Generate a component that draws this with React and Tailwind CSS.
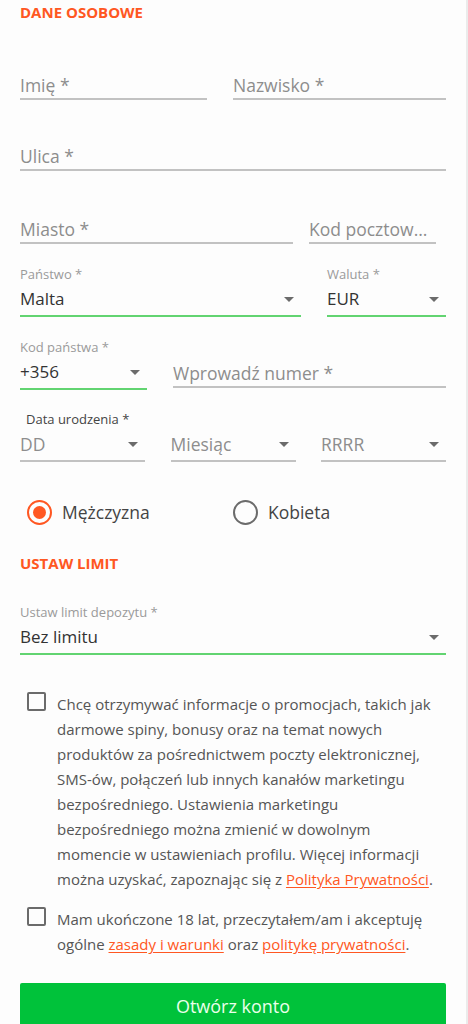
import React from 'react'

const ORANGE = 'text-[#ff5722]'

const Arrow = () => (
  <svg width="10" height="5" viewBox="0 0 10 5" className="shrink-0">
    <path d="M0 0h10L5 5z" fill="#6b6b6b" />
  </svg>
)

// pole tekstowe z samym placeholderem
const TextField = ({ placeholder, className = '' }) => (
  <div className={`border-b-2 border-[#c2c2c2] pb-[1px] ${className}`}>
    <div className="h-[24px] leading-[24px] text-[17.5px] text-[#8d8d8d] whitespace-nowrap overflow-hidden text-ellipsis">
      {placeholder}
    </div>
  </div>
)

const Select = ({ label, value, placeholder, green, className = '', labelClass = '' }) => (
  <div className={className}>
    {label && (
      <div className={`h-[16px] leading-[16px] text-[13px] text-[#9a9a9a] mb-[5px] ${labelClass}`}>{label}</div>
    )}
    <div
      className={`flex items-center justify-between pr-[7px] pb-[4px] border-b-2 ${
        green ? 'border-[#62d471]' : 'border-[#c2c2c2]'
      }`}
    >
      <span className={`h-[24px] leading-[24px] ${value ? 'text-[17px] text-[#333]' : 'text-[17.5px] text-[#8d8d8d]'}`}>
        {value || placeholder}
      </span>
      <Arrow />
    </div>
  </div>
)

const Radio = ({ checked, label }) => (
  <div className="flex items-center">
    <div
      className={`w-[25px] h-[25px] rounded-full border-2 flex items-center justify-center ${
        checked ? 'border-[#ff5722]' : 'border-[#6b6b6b]'
      }`}
    >
      {checked && <div className="w-[13px] h-[13px] rounded-full bg-[#ff5722]" />}
    </div>
    <span className="ml-[10px] text-[17.5px] text-[#444]">{label}</span>
  </div>
)

const Check = () => <div className="w-[19px] h-[19px] shrink-0 border-2 border-[#6b6b6b] rounded-[2px]" />

const Link = ({ children }) => <span className={`${ORANGE} underline underline-offset-2`}>{children}</span>

export default function App() {
  return (
    <div
      className="w-[468px] min-h-[1024px] bg-[#fdfdfd] border-r-2 border-[#ebebeb] px-5 overflow-hidden"
      style={{ fontFamily: '"Open Sans", "Noto Sans", sans-serif' }}
    >
      <div className={`pt-[2px] h-[22px] leading-[20px] text-[15px] font-bold ${ORANGE}`}>DANE OSOBOWE</div>

      {/* imię / nazwisko */}
      <div className="flex justify-between mt-[51px]">
        <TextField placeholder="Imię *" className="w-[187px]" />
        <TextField placeholder="Nazwisko *" className="w-[213px]" />
      </div>

      <TextField placeholder="Ulica *" className="mt-[44px]" />

      <div className="flex mt-[46px]">
        <TextField placeholder="Miasto *" className="w-[273px]" />
        <TextField placeholder="Kod pocztowy *" className="w-[127px] ml-[16px]" />
      </div>

      <div className="flex justify-between mt-[22px]">
        <Select label="Państwo *" value="Malta" green className="w-[281px]" />
        <Select label="Waluta *" value="EUR" green className="w-[119px]" />
      </div>

      <div className="flex justify-between items-end mt-[22px]">
        <Select label="Kod państwa *" value="+356" green className="w-[127px]" />
        <TextField placeholder="Wprowadź numer *" className="w-[273px] mb-[2px]" />
      </div>

      <div className="mt-[21px]">
        <div className="h-[16px] leading-[16px] text-[13px] text-[#444] ml-[6px] mb-[5px]">Data urodzenia *</div>
        <div className="flex justify-between">
          <Select placeholder="DD" className="w-[125px]" />
          <Select placeholder="Miesiąc" className="w-[125px]" />
          <Select placeholder="RRRR" className="w-[125px]" />
        </div>
      </div>

      <div className="flex mt-[37px] ml-[7px]">
        <div className="w-[206px]">
          <Radio checked label="Mężczyzna" />
        </div>
        <Radio label="Kobieta" />
      </div>

      <div className={`mt-[28px] h-[20px] leading-[20px] text-[15px] font-bold ${ORANGE}`}>USTAW LIMIT</div>

      <Select label="Ustaw limit depozytu *" value="Bez limitu" green className="mt-[31px]" />

      <div className="flex mt-[37px] ml-[7px]">
        <Check />
        <p className="ml-[11px] text-[15px] leading-[25px] text-[#555]">
          Chcę otrzymywać informacje o promocjach, takich jak darmowe spiny, bonusy oraz na temat nowych produktów za
          pośrednictwem poczty elektronicznej, SMS-ów, połączeń lub innych kanałów marketingu bezpośredniego. Ustawienia
          marketingu bezpośredniego można zmienić w dowolnym momencie w ustawieniach profilu. Więcej informacji można
          uzyskać, zapoznając się z <Link>Polityka Prywatności</Link>.
        </p>
      </div>

      <div className="flex mt-[15px] ml-[7px]">
        <Check />
        <p className="ml-[11px] text-[15px] leading-[25px] text-[#555]">
          Mam ukończone 18 lat, przeczytałem/am i akceptuję ogólne <Link>zasady i warunki</Link> oraz{' '}
          <Link>politykę prywatności</Link>.
        </p>
      </div>

      <button className="mt-[26px] w-full h-[46px] rounded-[2px] bg-[#00c23a] text-[#eaffea] text-[18px]">
        Otwórz konto
      </button>
    </div>
  )
}
